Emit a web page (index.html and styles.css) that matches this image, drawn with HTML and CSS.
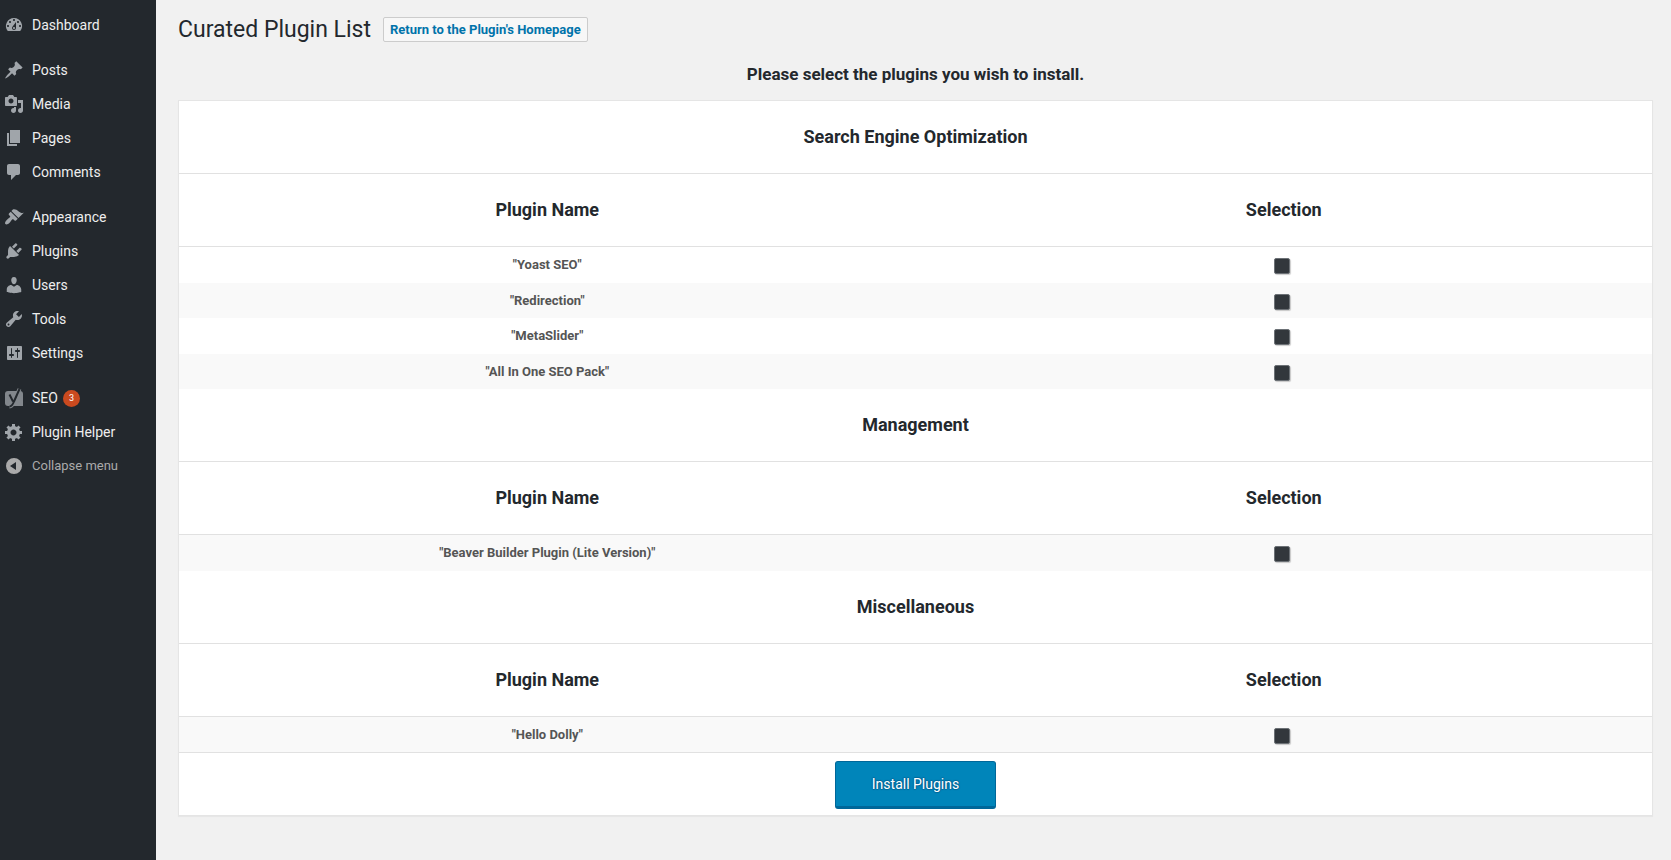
FILE: index.html
```html
<!DOCTYPE html>
<html lang="en">
<head>
<meta charset="utf-8">
<title>Curated Plugin List</title>
<link rel="stylesheet" href="styles.css">
</head>
<body>
<div class="admin">
  <nav class="sidebar" aria-label="Main menu">
    <ul class="menu">
      <li><a class="item" href="#"><svg class="icon" viewBox="0 0 20 20"><path fill-rule="evenodd" d="M3.76 16h12.48A7.998 7.998 0 0 0 10 3a7.998 7.998 0 0 0-6.24 13zM10 4c.55 0 1 .45 1 1s-.45 1-1 1-1-.45-1-1 .45-1 1-1zM6 6c.55 0 1 .45 1 1s-.45 1-1 1-1-.45-1-1 .45-1 1-1zm8 0c.55 0 1 .45 1 1s-.45 1-1 1-1-.45-1-1 .45-1 1-1zm-5.37 5.55L12 7v6c0 1.1-.9 2-2 2s-2-.9-2-2c0-.57.24-1.08.63-1.45zM4 10c.55 0 1 .45 1 1s-.45 1-1 1-1-.45-1-1 .45-1 1-1zm12 0c.55 0 1 .45 1 1s-.45 1-1 1-1-.45-1-1 .45-1 1-1zm-5 3c0-.55-.45-1-1-1s-1 .45-1 1 .45 1 1 1 1-.45 1-1z"/></svg>Dashboard</a></li>
    </ul>
    <ul class="menu">
      <li><a class="item" href="#"><svg class="icon" viewBox="0 0 20 20"><path d="M10.44 3.02l1.82-1.82 6.36 6.35-1.83 1.82c-1.05-.68-2.48-.57-3.41.36l-.75.75c-.92.93-1.04 2.35-.35 3.41l-1.83 1.82-2.41-2.41-2.8 2.79c-.42.42-3.38 2.71-3.8 2.29s1.86-3.39 2.28-3.81l2.79-2.79L4.1 9.36l1.83-1.82c1.05.69 2.48.57 3.4-.36l.75-.75c.93-.92 1.05-2.35.36-3.41z"/></svg>Posts</a></li>
      <li><a class="item" href="#"><svg class="icon" viewBox="0 0 20 20"><path fill-rule="evenodd" d="M13 11V4c0-.55-.45-1-1-1h-1.67L9 1H5L3.67 3H2c-.55 0-1 .45-1 1v7c0 .55.45 1 1 1h10c.55 0 1-.45 1-1zM7 4.5c1.38 0 2.5 1.12 2.5 2.5S8.38 9.5 7 9.5 4.5 8.38 4.5 7 5.62 4.5 7 4.5zM14 6h5v10.5c0 1.38-1.12 2.5-2.5 2.5S14 17.88 14 16.5s1.12-2.5 2.5-2.5c.17 0 .34.02.5.05V9h-3V6zm-4 8.05V13h2v3.5c0 1.38-1.12 2.5-2.5 2.5S7 17.88 7 16.5 8.12 14 9.5 14c.17 0 .34.02.5.05z"/></svg>Media</a></li>
      <li><a class="item" href="#"><svg class="icon" viewBox="0 0 20 20"><path d="M6 15V2h10v13H6zm-1 1h8v2H3V5h2v11z"/></svg>Pages</a></li>
      <li><a class="item" href="#"><svg class="icon" viewBox="0 0 20 20"><path d="M5 2h9c1.1 0 2 .9 2 2v7c0 1.1-.9 2-2 2h-2l-5 5v-5H5c-1.1 0-2-.9-2-2V4c0-1.1.9-2 2-2z"/></svg>Comments</a></li>
    </ul>
    <ul class="menu">
      <li><a class="item" href="#"><svg class="icon" viewBox="0 0 20 20"><path d="M14.48 11.06L7.41 3.99l1.5-1.5c.5-.56 2.3-.47 3.51.32 1.21.8 1.43 1.28 2.91 2.1 1.18.64 2.45 1.26 4.45.85zm-.71.71L6.7 4.7 4.93 6.47c-.39.39-.39 1.02 0 1.41l1.06 1.06c.39.39.39 1.03 0 1.42-.6.6-1.43 1.11-2.21 1.69-.35.26-.7.53-1.01.84C1.43 14.23.4 16.08 1.4 17.07c.99 1 2.84-.03 4.18-1.36.31-.31.58-.66.85-1.02.57-.78 1.08-1.61 1.69-2.21.39-.39 1.02-.39 1.41 0l1.06 1.06c.39.39 1.02.39 1.41 0z"/></svg>Appearance</a></li>
      <li><a class="item" href="#"><svg class="icon" viewBox="0 0 20 20"><path d="M13.11 4.36L9.87 7.6 8 5.73l3.24-3.24c.35-.34 1.05-.2 1.56.32.52.51.66 1.21.31 1.55zm-8 1.77l.91-1.12 9.01 9.01-1.19.84c-.71.71-2.63 1.16-3.82 1.16H6.14L4.9 17.26c-.59.59-1.54.59-2.12 0-.59-.58-.59-1.53 0-2.12l1.24-1.24v-3.88c0-1.13.4-3.19 1.09-3.89zm7.26 3.97l3.24-3.24c.34-.35 1.04-.21 1.55.31.52.51.66 1.21.31 1.55l-3.24 3.25z"/></svg>Plugins</a></li>
      <li><a class="item" href="#"><svg class="icon" viewBox="0 0 20 20"><path d="M10 9.25c-2.27 0-2.73-3.44-2.73-3.44C7 4.02 7.82 2 9.97 2c2.16 0 2.98 2.02 2.71 3.81 0 0-.41 3.44-2.68 3.44zm0 2.57L12.72 10c2.39 0 4.52 2.33 4.52 4.53v2.49s-3.65 1.13-7.24 1.13c-3.65 0-7.24-1.13-7.24-1.13v-2.49c0-2.25 1.94-4.48 4.47-4.48z"/></svg>Users</a></li>
      <li><a class="item" href="#"><svg class="icon" viewBox="0 0 20 20"><path fill-rule="evenodd" d="M16.68 9.77c-1.34 1.34-3.3 1.67-4.95.99l-5.41 6.52c-.99.99-2.59.99-3.58 0s-.99-2.59 0-3.57l6.52-5.42c-.68-1.65-.35-3.61.99-4.95 1.28-1.28 3.12-1.62 4.72-1.06l-2.89 2.89 2.82 2.82 2.86-2.87c.53 1.58.18 3.39-1.08 4.65zM3.81 16.21c.4.39 1.04.39 1.43 0 .4-.4.4-1.04 0-1.43-.39-.4-1.03-.4-1.43 0-.39.39-.39 1.03 0 1.43z"/></svg>Tools</a></li>
      <li><a class="item" href="#"><svg class="icon" viewBox="0 0 20 20"><path fill-rule="evenodd" d="M18 16V4c0-.55-.45-1-1-1H4c-.55 0-1 .45-1 1v12c0 .55.45 1 1 1h13c.55 0 1-.45 1-1zM8 11h1c.55 0 1 .45 1 1s-.45 1-1 1H8v1.5c0 .28-.22.5-.5.5s-.5-.22-.5-.5V13H6c-.55 0-1-.45-1-1s.45-1 1-1h1V5.5c0-.28.22-.5.5-.5s.5.22.5.5V11zm5-2h-1c-.55 0-1-.45-1-1s.45-1 1-1h1V5.5c0-.28.22-.5.5-.5s.5.22.5.5V7h1c.55 0 1 .45 1 1s-.45 1-1 1h-1v5.5c0 .28-.22.5-.5.5s-.5-.22-.5-.5V9z"/></svg>Settings</a></li>
    </ul>
    <ul class="menu">
      <li><a class="item" href="#"><svg class="icon icon-seo" viewBox="0 0 20 20"><path class="seo-tile" d="M4 3h12a3 3 0 0 1 3 3v12H4a3 3 0 0 1-3-3V6a3 3 0 0 1 3-3z"/><path class="seo-edge" d="M5.500 6.500l3.500 7M15.500 1L10 13.500c-1.200 3-2.200 5-4.500 5"/><path class="seo-mark" d="M5.500 6.500l3.500 7M15.500 1L10 13.500c-1.200 3-2.200 5-4.500 5"/></svg>SEO <span class="badge">3</span></a></li>
      <li><a class="item" href="#"><svg class="icon" viewBox="0 0 20 20"><path fill-rule="evenodd" d="M18 12h-2.18c-.17.7-.44 1.35-.81 1.93l1.54 1.54-2.1 2.1-1.54-1.54c-.58.36-1.23.63-1.91.79V19H8v-2.18c-.68-.16-1.33-.43-1.91-.79l-1.54 1.54-2.12-2.12 1.54-1.54c-.36-.58-.63-1.23-.79-1.91H1V9.03h2.17c.16-.7.44-1.35.8-1.94L2.43 5.55l2.1-2.1 1.54 1.54c.58-.37 1.24-.64 1.93-.81V2h3v2.18c.68.16 1.33.43 1.91.79l1.54-1.54 2.12 2.12-1.54 1.54c.36.59.64 1.24.8 1.94H18V12zm-8.5 1.5c1.66 0 3-1.34 3-3s-1.34-3-3-3-3 1.34-3 3 1.34 3 3 3z"/></svg>Plugin Helper</a></li>
      <li><button class="item collapse" type="button"><svg class="icon" viewBox="0 0 20 20"><path fill-rule="evenodd" d="M10 2a8 8 0 1 1 0 16 8 8 0 0 1 0-16zM12 6l-6 4 6 4z"/></svg>Collapse menu</button></li>
    </ul>
  </nav>
  <main class="content">
    <header class="page-head">
      <h1 class="title">Curated Plugin List</h1>
      <a class="title-action" href="#">Return to the Plugin's Homepage</a>
    </header>
    <form class="picker">
      <h2 class="lead">Please select the plugins you wish to install.</h2>
      <table class="plugins">
        <tbody>
          <tr class="head"><th colspan="2">Search Engine Optimization</th></tr>
          <tr class="head"><th>Plugin Name</th><th>Selection</th></tr>
          <tr><td><label for="p1">"Yoast SEO"</label></td><td><input class="check" type="checkbox" id="p1"></td></tr>
          <tr class="alt"><td><label for="p2">"Redirection"</label></td><td><input class="check" type="checkbox" id="p2"></td></tr>
          <tr><td><label for="p3">"MetaSlider"</label></td><td><input class="check" type="checkbox" id="p3"></td></tr>
          <tr class="alt"><td><label for="p4">"All In One SEO Pack"</label></td><td><input class="check" type="checkbox" id="p4"></td></tr>
        </tbody>
        <tbody>
          <tr class="head"><th colspan="2">Management</th></tr>
          <tr class="head"><th>Plugin Name</th><th>Selection</th></tr>
          <tr class="alt"><td><label for="p5">"Beaver Builder Plugin (Lite Version)"</label></td><td><input class="check" type="checkbox" id="p5"></td></tr>
        </tbody>
        <tbody>
          <tr class="head"><th colspan="2">Miscellaneous</th></tr>
          <tr class="head"><th>Plugin Name</th><th>Selection</th></tr>
          <tr class="alt"><td><label for="p6">"Hello Dolly"</label></td><td><input class="check" type="checkbox" id="p6"></td></tr>
        </tbody>
        <tfoot>
          <tr><td class="actions" colspan="2"><button class="install" type="button">Install Plugins</button></td></tr>
        </tfoot>
      </table>
    </form>
  </main>
</div>
</body>
</html>
```
FILE: styles.css
```css
* {
  box-sizing: border-box;
}

body {
  margin: 0;
  background: #f1f1f1;
  color: #23282d;
  font-family: Roboto, "Liberation Sans", sans-serif;
  font-size: 13px;
}

.admin {
  display: flex;
  min-height: 100vh;
}

.sidebar {
  flex: none;
  display: flex;
  flex-direction: column;
  gap: 11px;
  width: 156px;
  padding-top: 8px;
  background: #23282d;
}

.menu {
  margin: 0;
  padding: 0;
  list-style: none;
}

.item {
  display: flex;
  align-items: center;
  gap: 8px;
  width: 100%;
  height: 34px;
  padding: 0 4px;
  border: 0;
  background: none;
  color: #eee;
  font: 14px/18px Roboto, "Liberation Sans", sans-serif;
  text-decoration: none;
  white-space: nowrap;
}

.icon {
  flex: none;
  width: 20px;
  height: 20px;
  fill: #a0a5aa;
}

.icon-seo {
  overflow: visible;
}

.seo-tile {
  fill: #82878c;
}

.seo-edge,
.seo-mark {
  fill: none;
  stroke: #82878c;
  stroke-width: 4;
}

.seo-mark {
  stroke: #23282d;
  stroke-width: 2;
}

.collapse {
  color: #aaa;
  font-size: 13px;
}

.collapse .icon {
  fill: #aaa;
}

.badge {
  width: 17px;
  margin-left: -3px;
  border-radius: 9px;
  background: #ca4a1f;
  color: #fff;
  font-size: 9px;
  line-height: 17px;
  text-align: center;
}

.content {
  flex: 1;
  min-width: 0;
  padding: 13px 18px 40px 22px;
}

.page-head {
  display: flex;
  align-items: center;
  gap: 12px;
}

.title {
  margin: 0;
  font-size: 23px;
  font-weight: 400;
  line-height: 33px;
}

.title-action {
  padding: 0 6px;
  border: 1px solid #ccc;
  border-radius: 2px;
  background: #f7f7f7;
  color: #0073aa;
  font-weight: 700;
  line-height: 23px;
  text-decoration: none;
}

.lead {
  margin: 17px 0 14px;
  font-size: 17px;
  line-height: 23px;
  text-align: center;
}

.plugins {
  width: 100%;
  table-layout: fixed;
  border: 1px solid #e5e5e5;
  border-spacing: 0;
  background: #fff;
  box-shadow: 0 1px 1px rgba(0, 0, 0, 0.04);
}

.plugins th,
.plugins td {
  padding: 8px 10px;
  text-align: center;
  vertical-align: top;
}

.plugins th {
  padding: 24px 10px;
  border-bottom: 1px solid #e1e1e1;
  font-size: 18px;
  line-height: 24px;
}

.plugins td {
  color: #555;
  font-weight: 700;
  line-height: 1.5;
}

.alt td {
  background: #f9f9f9;
}

.check {
  appearance: none;
  display: inline-block;
  width: 16px;
  height: 16px;
  margin: 3px 4px 0 0;
  border: 1px solid #6c7176;
  border-radius: 2px;
  background: #32373c;
  box-shadow: 1px 1px 1px rgba(0, 0, 0, 0.2);
  vertical-align: top;
}

.plugins .actions {
  padding: 8px 10px 6px;
  border-top: 1px solid #e1e1e1;
}

.install {
  height: 48px;
  padding: 0 36px;
  border: 1px solid #006799;
  border-bottom-width: 3px;
  border-radius: 3px;
  background: #0085ba;
  color: #fff;
  font: 14px/44px Roboto, "Liberation Sans", sans-serif;
  text-shadow: 0 -1px 1px #006799, 1px 0 1px #006799, 0 1px 1px #006799, -1px 0 1px #006799;
  vertical-align: top;
}
```
